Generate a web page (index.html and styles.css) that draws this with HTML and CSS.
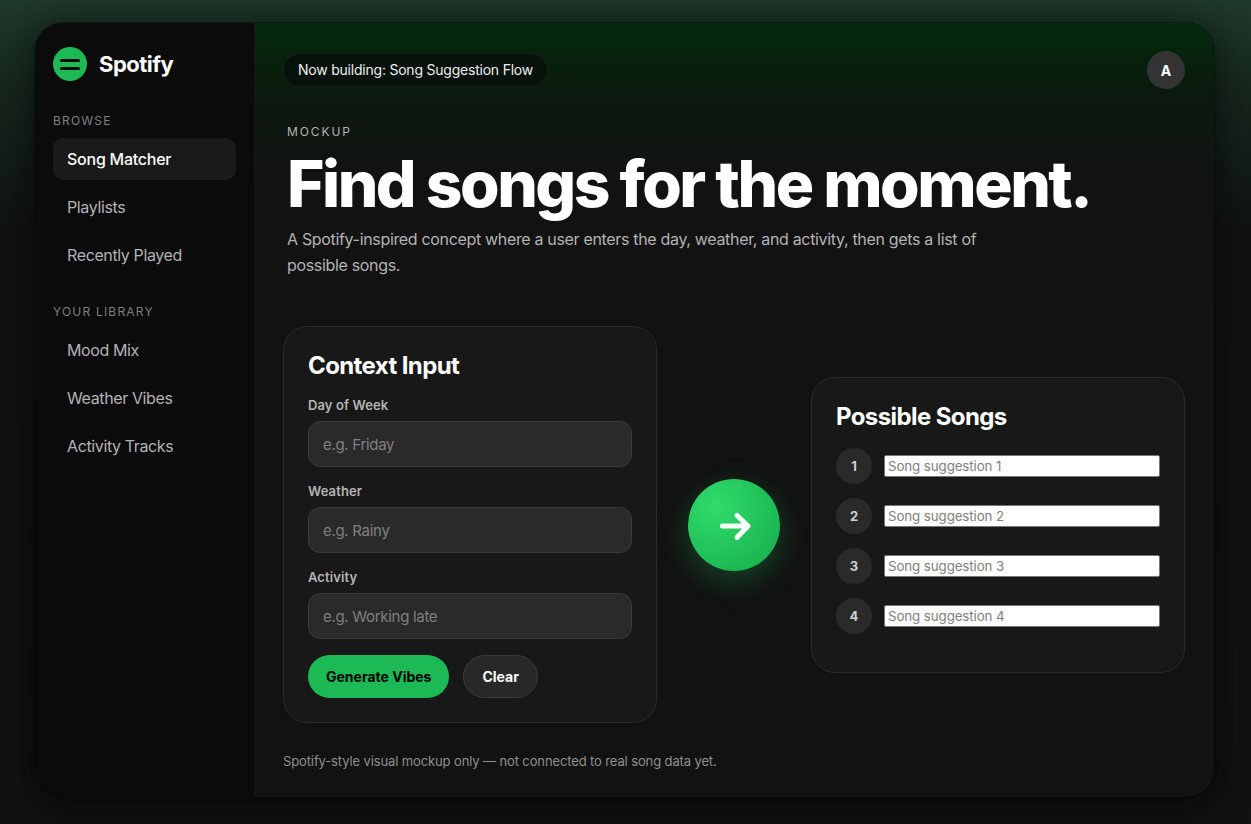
FILE: index.html
```html
<!DOCTYPE html>
<html lang="en">
<head>
<meta charset="utf-8">
<title>Spotify Song Matcher</title>
<link rel="stylesheet" href="styles.css">
</head>
<body>
<div class="window">
  <aside class="sidebar">
    <div class="brand">
      <span class="logo"><i></i><i></i></span>
      <span class="brand-name">Spotify</span>
    </div>
    <div class="section-label">BROWSE</div>
    <nav class="nav">
      <a class="nav-item active">Song Matcher</a>
      <a class="nav-item">Playlists</a>
      <a class="nav-item">Recently Played</a>
    </nav>
    <div class="section-label library">YOUR LIBRARY</div>
    <nav class="nav">
      <a class="nav-item">Mood Mix</a>
      <a class="nav-item">Weather Vibes</a>
      <a class="nav-item">Activity Tracks</a>
    </nav>
  </aside>
  <main class="main">
    <div class="topbar">
      <div class="pill">Now building: Song Suggestion Flow</div>
      <div class="avatar">A</div>
    </div>
    <div class="eyebrow">MOCKUP</div>
    <h1 class="title">Find songs for the moment.</h1>
    <p class="subtitle">A Spotify-inspired concept where a user enters the day, weather, and activity, then gets a list of possible songs.</p>
    <div class="flow">
      <section class="card">
        <h2 class="card-title">Context Input</h2>
        <label class="field-label">Day of Week</label>
        <input class="field" placeholder="e.g. Friday">
        <label class="field-label">Weather</label>
        <input class="field" placeholder="e.g. Rainy">
        <label class="field-label">Activity</label>
        <input class="field" placeholder="e.g. Working late">
        <div class="actions">
          <button class="btn btn-primary">Generate Vibes</button>
          <button class="btn btn-ghost">Clear</button>
        </div>
      </section>
      <div class="arrow">
        <svg class="arrow-icon" width="36" height="36" viewBox="0 0 36 36" fill="none" stroke="#fff" stroke-width="5" stroke-linecap="round" stroke-linejoin="round"><path d="M6.5 19H32M21 8.5 32 19 21 30.5"/></svg>
      </div>
      <section class="card card-songs">
        <h2 class="card-title">Possible Songs</h2>
        <div class="song"><span class="num">1</span><input class="song-input" placeholder="Song suggestion 1"></div>
        <div class="song"><span class="num">2</span><input class="song-input" placeholder="Song suggestion 2"></div>
        <div class="song"><span class="num">3</span><input class="song-input" placeholder="Song suggestion 3"></div>
        <div class="song"><span class="num">4</span><input class="song-input" placeholder="Song suggestion 4"></div>
      </section>
    </div>
    <p class="footnote">Spotify-style visual mockup only — not connected to real song data yet.</p>
  </main>
</div>
</body>
</html>
```
FILE: styles.css
```css
* { box-sizing: border-box; }
html, body { height: 100%; }
body {
  margin: 0;
  height: 824px;
  overflow: hidden;
  padding: 23px 37px 27px 35px;
  font-family: Inter, "Liberation Sans", sans-serif;
  color: #fff;
  background: linear-gradient(180deg, #1f3a2b 0%, #17261d 12%, #111412 28%, #111211 100%);
}
.window {
  display: flex;
  height: 774px;
  border-radius: 28px;
  overflow: hidden;
  background: #121212;
  box-shadow: 0 0 0 1px rgba(0,0,0,.35), 0 0 40px rgba(0,0,0,.4), 0 12px 40px rgba(0,0,0,.3);
}
.sidebar {
  width: 220px;
  flex: none;
  padding: 24px 18px;
  background: #0b0b0b;
  border-right: 1px solid #161616;
}
.brand { display: flex; align-items: center; gap: 12px; margin-bottom: 32px; }
.logo {
  width: 34px; height: 34px; border-radius: 50%;
  background: #1db954;
  display: flex; flex-direction: column; align-items: center; justify-content: center; gap: 5px;
}
.logo i { display: block; width: 20px; height: 3px; border-radius: 2px; background: #0b0b0b; }
.brand-name { font-size: 22px; font-weight: 700; letter-spacing: -.5px; }
.section-label { font-size: 12px; line-height: 15px; letter-spacing: 1.2px; color: #7f7f7f; margin-bottom: 10px; }
.section-label.library { margin-top: 28px; }
.nav { display: flex; flex-direction: column; gap: 6px; }
.nav-item {
  display: block;
  height: 42px;
  line-height: 42px;
  padding: 0 14px;
  border-radius: 10px;
  font-size: 16px;
  letter-spacing: -.38px;
  color: #b3b3b3;
}
.nav-item.active { background: #1a1a1a; color: #fff; font-weight: 500; letter-spacing: -.25px; }
.main {
  flex: 1;
  padding: 28px 29px 0 28px;
  background: linear-gradient(180deg, #032a0b 0, #0b1a0e 70px, #121212 160px);
}
.topbar { display: flex; justify-content: space-between; align-items: center; height: 38px; margin-bottom: 35px; }
.pill {
  height: 34px; line-height: 32px;
  padding: 0 14px;
  border-radius: 17px;
  background: #06120a;
  border: 1px solid #11241a;
  font-size: 14px;
  letter-spacing: -.22px;
  color: #eee;
}
.avatar {
  width: 38px; height: 38px; border-radius: 50%;
  background: #333;
  display: flex; align-items: center; justify-content: center;
  font-size: 14px; font-weight: 700;
}
.eyebrow { font-size: 12px; line-height: 15px; letter-spacing: 1.9px; color: #b3b3b3; margin-left: 4px; }
.title {
  margin: 10px 0 0 4px;
  font-size: 64px; line-height: 70px; font-weight: 800; letter-spacing: -2.46px;
}
.subtitle {
  margin: 7px 0 0 4px;
  width: 720px;
  font-size: 16px; line-height: 26px; letter-spacing: -.33px; color: #b3b3b3;
}
.flow {
  display: grid;
  grid-template-columns: 374px 92px 374px;
  justify-content: space-between;
  align-items: center;
  margin-top: 48px;
}
.card {
  height: 397px;
  padding: 24px;
  border-radius: 24px;
  background: #181818;
  border: 1px solid #2a2a2a;
}
.card-songs { height: 296px; }
.card-title { margin: 0 0 16px; font-size: 24px; line-height: 30px; font-weight: 700; letter-spacing: -.6px; }
.field-label { display: block; font-size: 13px; line-height: 16px; font-weight: 600; letter-spacing: .1px; color: #b3b3b3; margin-bottom: 8px; }
.field {
  display: block; width: 100%; height: 46px;
  padding: 0 14px;
  margin-bottom: 16px;
  border-radius: 12px;
  border: 1px solid #3a3a3a;
  background: #2a2a2a;
  color: #fff;
  font: 15px Inter, "Liberation Sans", sans-serif;
  letter-spacing: -.3px;
}
.field::placeholder { color: #808080; opacity: 1; }
.actions { display: flex; gap: 14px; }
.btn {
  height: 43px;
  border-radius: 22px;
  font: 700 14px Inter, "Liberation Sans", sans-serif;
  padding: 0 18px;
}
.btn-primary { background: #1db954; color: #000; border: 0; }
.btn-ghost { background: #282828; color: #fff; border: 1px solid #3a3a3a; }
.arrow {
  width: 92px; height: 92px; border-radius: 50%;
  background: radial-gradient(circle at 30% 30%, #2fdc6a, #1db954 70%, #1aa84c);
  box-shadow: 0 10px 30px rgba(29,185,84,.3);
  display: flex; align-items: center; justify-content: center;
}
.song { display: flex; align-items: center; gap: 12px; height: 36px; margin-bottom: 14px; }
.num {
  width: 36px; height: 36px; flex: none; border-radius: 50%;
  background: #2a2a2a; color: #d0d0d0;
  display: flex; align-items: center; justify-content: center;
  font-size: 13px; font-weight: 700;
}
.song-input {
  flex: 1; min-width: 0; height: 22px;
  padding: 1px 3px;
  background: #fff;
  border: 1px solid #767676;
  border-radius: 2px;
  font: 13.33px Inter, "Liberation Sans", sans-serif;
  letter-spacing: -.1px;
}
.song-input::placeholder { color: #808080; opacity: 1; }
.footnote { margin: 30px 0 0; font-size: 13px; line-height: 16px; letter-spacing: -.12px; color: #8f8f8f; }
```
